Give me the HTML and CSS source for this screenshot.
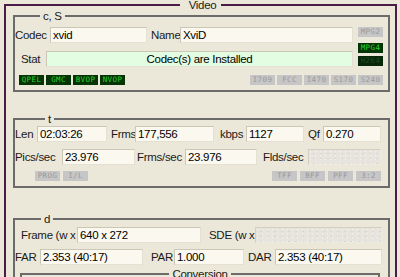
FILE: index.html
```html
<!DOCTYPE html>
<html lang="en">
<head>
    <meta charset="UTF-8">
    <title>Video</title>
    <link rel="stylesheet" href="styles.css">
</head>
<body>

<fieldset class="frame">
    <legend>Video</legend>

    <!-- codec / status -->
    <fieldset class="group group-codec">
        <legend>c, S</legend>
        <div class="codec-top">
            <div class="codec-fields">
                <div class="row row-codec">
                    <label>Codec</label>
                    <input type="text" value="xvid" readonly>
                    <label class="pad4">Name</label>
                    <input type="text" value="XviD" readonly>
                </div>
                <div class="row row-stat">
                    <label class="pad6">Stat</label>
                    <input type="text" class="ok" value="Codec(s) are Installed" readonly>
                </div>
            </div>
            <div class="side-flags">
                <span class="flag">MPG2</span>
                <span class="flag on">MPG4</span>
                <span class="flag dim">H264</span>
            </div>
        </div>
        <div class="flag-row">
            <div class="flags">
                <span class="flag on">QPEL</span>
                <span class="flag on">GMC</span>
                <span class="flag on">BVOP</span>
                <span class="flag on">NVOP</span>
            </div>
            <div class="flags">
                <span class="flag">I709</span>
                <span class="flag">FCC</span>
                <span class="flag">I470</span>
                <span class="flag">S170</span>
                <span class="flag">S240</span>
            </div>
        </div>
    </fieldset>

    <!-- timing -->
    <fieldset class="group group-time">
        <legend>t</legend>
        <div class="row row-len">
            <label>Len</label>
            <input type="text" value="02:03:26" readonly>
            <label class="pad4">Frms</label>
            <input type="text" value="177,556" readonly>
            <label class="pad6">kbps</label>
            <input type="text" value="1127" readonly>
            <label class="pad4">Qf</label>
            <input type="text" value="0.270" readonly>
        </div>
        <div class="row row-rate">
            <label>Pics/sec</label>
            <input type="text" value="23.976" readonly>
            <label class="pad2">Frms/sec</label>
            <input type="text" value="23.976" readonly>
            <label class="pad6">Flds/sec</label>
            <input type="text" class="off" value="" disabled>
        </div>
        <div class="flag-row flag-row-time">
            <div class="flags wide">
                <span class="flag">PROG</span>
                <span class="flag">I/L</span>
            </div>
            <div class="flags wide">
                <span class="flag">TFF</span>
                <span class="flag">BFF</span>
                <span class="flag">PFF</span>
                <span class="flag">3:2</span>
            </div>
        </div>
    </fieldset>

    <!-- dimensions -->
    <fieldset class="group group-dim">
        <legend>d</legend>
        <div class="row row-frame">
            <label class="pad6">Frame (w x</label>
            <input type="text" value="640 x 272" readonly>
            <label class="pad8">SDE (w x</label>
            <input type="text" class="off" value="" disabled>
        </div>
        <div class="row row-aspect">
            <label>FAR</label>
            <input type="text" value="2.353 (40:17)" readonly>
            <label class="pad8">PAR</label>
            <input type="text" value="1.000" readonly>
            <label class="pad4">DAR</label>
            <input type="text" value="2.353 (40:17)" readonly>
        </div>
        <fieldset class="conversion">
            <legend>Conversion</legend>
            <div class="conv-body"></div>
        </fieldset>
    </fieldset>
</fieldset>

</body>
</html>
```

FILE: styles.css
```css
html, body {
    margin: 0;
    overflow: hidden;
}

body {
    background: #ebe8da;
    font-family: "Liberation Sans", Arial, sans-serif;
    font-size: 11.5px;
    letter-spacing: -0.3px;
    color: #1a1a1a;
}

fieldset {
    min-inline-size: 0;
    padding: 0;
}

legend {
    font-size: 11.5px;
    line-height: 12px;
    padding: 0 3px;
}

/* outer purple frame */
.frame {
    margin: 0 3px 0 4px;
    border: 2px solid #4c1c48;
    height: 400px;
}

.frame > legend {
    line-height: 10px;
    margin: 0 auto;
    padding: 0 5px 0 9px;
}

/* grey group boxes */
.group {
    border: 2px solid #6b6b6b;
    margin: 0 5px 0 7px;
}

.group-codec {
    margin-top: 0;
    padding: 5px 0 5px 0;
}

.group-codec > legend { margin-left: 25px; }

.group-time {
    margin-top: 21px;
    padding: 1px 0 5px 0;
}

.group-time > legend { margin-left: 30px; }

.group-dim {
    margin-top: 25px;
    padding: 2px 0 0 0;
}

.group-dim > legend { margin-left: 26px; }

/* rows of label + field */
.row {
    display: grid;
    height: 16px;
    align-items: center;
}

.row label {
    white-space: nowrap;
    line-height: 16px;
}

.pad2 { padding-left: 2px; }
.pad4 { padding-left: 4px; }
.pad6 { padding-left: 6px; }
.pad8 { padding-left: 8px; }

.row input {
    box-sizing: border-box;
    width: 100%;
    height: 16px;
    margin: 0;
    padding: 0 2px;
    font: inherit;
    letter-spacing: inherit;
    color: #000;
    background: #fbf9ef;
    border: 1px solid;
    border-color: #cbc7b7 #e4e1d3 #e4e1d3 #cbc7b7;
    outline: none;
}

.row input.ok {
    background: #e3fde3;
    text-align: center;
}

.row input.off {
    background-color: #e6e4dc;
    background-image:
        radial-gradient(circle at 30% 40%, #f4f3ee 0.6px, transparent 1px),
        radial-gradient(circle at 70% 70%, #d8d6cd 0.6px, transparent 1px);
    background-size: 5px 4px, 7px 5px;
    border-color: #d2cfc2 #ecebe2 #ecebe2 #d2cfc2;
}

.codec-top {
    display: flex;
}

.codec-fields {
    width: 338px;
}

.row-codec { grid-template-columns: 35px 97px 33px 173px; }

.row-stat {
    grid-template-columns: 31px 307px;
    margin-top: 8px;
}

.side-flags {
    display: flex;
    flex-direction: column;
    margin-left: 5px;
}

.side-flags .flag:nth-child(2) { margin-top: 6px; }
.side-flags .flag:nth-child(3) { margin-top: 3px; }

.row-len { grid-template-columns: 22px 70px 28px 79px 32px 58px 19px 58px; }

.row-rate {
    grid-template-columns: 47px 73px 50px 72px 51px 73px;
    margin-top: 7px;
}

.row-frame { grid-template-columns: 62px 124px 54px 127px; }

.row-aspect {
    grid-template-columns: 25px 103px 31px 70px 31px 107px;
    margin-top: 6px;
}

/* little status flags */
.flag-row {
    display: flex;
    justify-content: space-between;
    margin-top: 8px;
    padding: 0 5px 0 4px;
}

.flag-row-time {
    margin-top: 6px;
    padding: 0 7px 0 20px;
}

.flags {
    display: flex;
    gap: 2px;
}

.flags.wide { gap: 3px; }

.flag {
    width: 25px;
    height: 10px;
    background: #c6c6c6;
    color: #9a9a9a;
    font-family: "DejaVu Sans Mono", monospace;
    font-size: 7.5px;
    line-height: 10px;
    letter-spacing: 0.4px;
    text-align: center;
    overflow: hidden;
}

.flag.on {
    background: #053505;
    color: #2ed02e;
}

.flag.dim {
    background: #082608;
    color: #1d4a1d;
}

/* nested conversion box */
.conversion {
    margin: 3px 8px 0 5px;
    border: 2px solid #6b6b6b;
}

.conversion > legend {
    margin: 0 auto;
    padding: 0 3px;
}

.conv-body {
    height: 30px;
}
```
